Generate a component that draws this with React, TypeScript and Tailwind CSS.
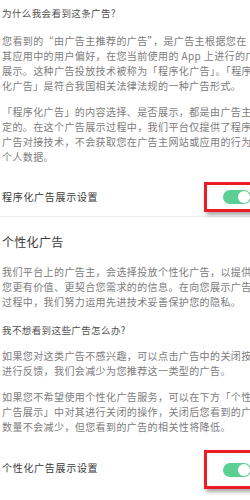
const font = { fontFamily: '"Noto Sans CJK SC", "Noto Sans", sans-serif' };

function Lines({ lines, className }: { lines: string[]; className?: string }) {
  return (
    <div className={className}>
      {lines.map((l, i) => (
        <div key={i} className="whitespace-nowrap">
          {l}
        </div>
      ))}
    </div>
  );
}

function ToggleRow({ label, boxClass, border }: { label: string; boxClass: string; border?: boolean }) {
  return (
    <div
      className={`flex h-[40px] items-center justify-between pl-[2px] ${border ? "border-b border-[#efefef]" : ""}`}
    >
      <span className="whitespace-nowrap text-[10px] tracking-[0.7px] text-[#3a3a3a]">{label}</span>
      <div
        className={`flex w-[56px] items-center border-[3px] border-[#ee1c24] pl-[16px] shadow-[2px_3px_4px_rgba(0,0,0,0.35)] ${boxClass}`}
      >
        <div className="flex h-[14px] w-[28px] items-center justify-end rounded-full bg-[#5ccf95] pr-[1px]">
          <div className="h-[12px] w-[12px] rounded-full bg-white" />
        </div>
      </div>
    </div>
  );
}

export default function App() {
  return (
    <div className="h-[500px] w-[250px] overflow-hidden bg-white" style={font}>
      <div className="w-[260px]">
        <div className="pl-[2px] text-[10px] leading-[15px] tracking-[0.4px] text-[#7c7c7c]">
          <div className="pt-[6px] text-[9.5px] text-[#505050]">为什么我会看到这条广告?</div>
          <Lines
            className="mt-[12px]"
            lines={[
              "您看到的“由广告主推荐的广告”，是广告主根据您在",
              "其应用中的用户偏好，在您当前使用的 App 上进行的广告",
              "展示。这种广告投放技术被称为「程序化广告」。「程序",
              "化广告」是符合我国相关法律法规的一种广告形式。",
            ]}
          />
          <Lines
            className="mt-[11px]"
            lines={[
              "「程序化广告」的内容选择、是否展示，都是由广告主决",
              "定的。在这个广告展示过程中，我们平台仅提供了程序化",
              "广告对接技术，不会获取您在广告主网站或应用的行为而",
              "个人数据。",
            ]}
          />
        </div>

        <div className="mt-[13px]">
          <ToggleRow label="程序化广告展示设置" boxClass="h-[30px]" border />
        </div>

        <div className="pl-[2px] text-[10px] leading-[15px] tracking-[0.4px] text-[#7c7c7c]">
          <div className="mt-[16px] text-[12px] leading-[18px] tracking-[0.3px] text-[#3a3a3a]">个性化广告</div>
          <Lines
            className="mt-[13px]"
            lines={[
              "我们平台上的广告主，会选择投放个性化广告，以提供对",
              "您更有价值、更契合您需求的的信息。在向您展示广告的",
              "过程中，我们努力运用先进技术妥善保护您的隐私。",
            ]}
          />
          <div className="mt-[14px] text-[9.5px] text-[#505050]">我不想看到这些广告怎么办?</div>
          <Lines
            className="mt-[10px]"
            lines={[
              "如果您对这类广告不感兴趣，可以点击广告中的关闭按钮",
              "进行反馈，我们会减少为您推荐这一类型的广告。",
            ]}
          />
          <Lines
            className="mt-[11px]"
            lines={[
              "如果您不希望使用个性化广告服务，可以在下方「个性化",
              "广告展示」中对其进行关闭的操作，关闭后您看到的广告",
              "数量不会减少，但您看到的广告的相关性将降低。",
            ]}
          />
        </div>

        <div className="mt-[13px]">
          <ToggleRow label="个性化广告展示设置" boxClass="h-[39px] mt-[5px]" />
        </div>
      </div>
    </div>
  );
}
